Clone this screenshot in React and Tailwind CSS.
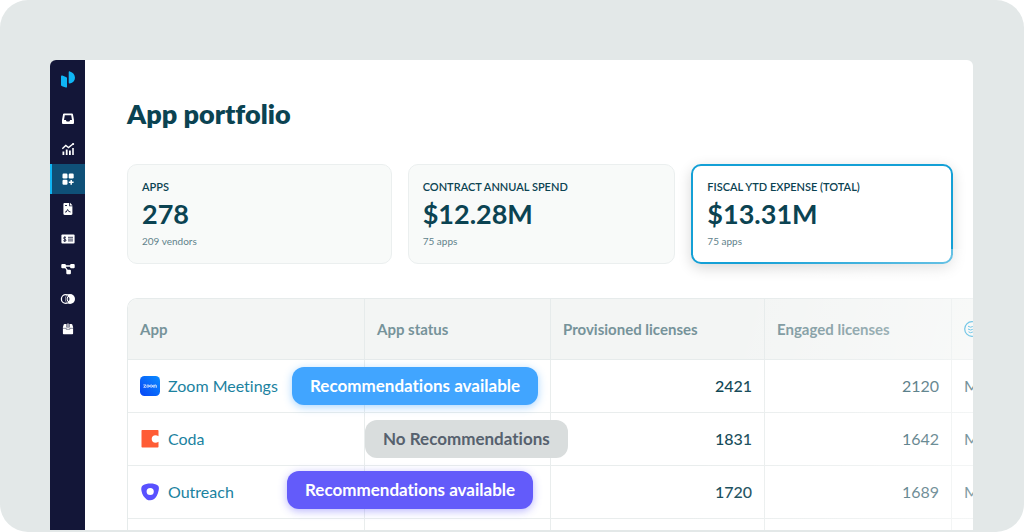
import React, { useState } from 'react';

const cards = [
  { label: 'APPS', value: '278', note: '209 vendors' },
  { label: 'CONTRACT ANNUAL SPEND', value: '$12.28M', note: '75 apps' },
  { label: 'FISCAL YTD EXPENSE (TOTAL)', value: '$13.31M', note: '75 apps' },
];

const ZoomLogo = () => (
  <svg viewBox="0 0 20 20" className="w-5 h-5 shrink-0" aria-hidden="true">
    <defs>
      <linearGradient id="zoomBlue" x1="1" y1="0" x2="0" y2="1">
        <stop offset="0" stopColor="#0a8cff" />
        <stop offset="1" stopColor="#0845f5" />
      </linearGradient>
    </defs>
    <rect width="20" height="20" rx="4.5" fill="url(#zoomBlue)" />
    <g fill="none" stroke="#fff" strokeWidth="0.7" strokeLinejoin="round" strokeLinecap="round">
      <path d="M3.7 8.9h2.2l-2.2 2.4h2.3" />
      <circle cx="8" cy="10.1" r="1.2" />
      <circle cx="11.2" cy="10.1" r="1.2" />
      <path d="M13.3 11.4V9.6c0-.9 1.5-.9 1.5 0v1.8M14.8 9.6c0-.9 1.6-.9 1.6 0v1.8" />
    </g>
  </svg>
);

const CodaLogo = () => (
  <svg viewBox="0 0 20 20" className="w-5 h-5 shrink-0" aria-hidden="true">
    <path
      d="M2.3 1h15.4a.8.8 0 0 1 .8.8v5.4c-1-.7-2-1-3-1-2.3 0-3.8 1.7-3.8 3.8s1.5 3.8 3.8 3.8c1 0 2-.3 3-1v5a.8.8 0 0 1-.8.8H2.3a.8.8 0 0 1-.8-.8V1.8a.8.8 0 0 1 .8-.8Z"
      fill="#ff5c35"
    />
  </svg>
);

const OutreachLogo = () => (
  <svg viewBox="0 0 20 20" className="w-5 h-5 shrink-0" aria-hidden="true">
    <path
      fillRule="evenodd"
      d="M10.5 1.5c3 0 5.3.6 7 1.7 1.5 1 1.7 2.6 1.2 5-1 4.6-2.7 7.5-5 9.1-2 1.4-5 1.4-7 .1-2.5-1.6-4.5-4.6-5.2-8.3C1 6.4 1.2 4.6 3 3.3c1.8-1.2 4.5-1.8 7.5-1.8ZM10.2 5.9a3.6 3.6 0 1 0 0 7.2 3.6 3.6 0 0 0 0-7.2Z"
      fill="#5951ff"
    />
  </svg>
);

const rows = [
  {
    name: 'Zoom Meetings',
    logo: <ZoomLogo />,
    status: 'Recommendations available',
    badge: '-left-[73px] top-[7px] bg-[#41a5ff] text-white shadow-[0_2px_8px_rgba(65,165,255,0.45)]',
    provisioned: 2421,
    engaged: 2120,
  },
  {
    name: 'Coda',
    logo: <CodaLogo />,
    status: 'No Recommendations',
    badge: 'left-0 top-[7px] bg-[#d9dddd] text-[#56616e]',
    provisioned: 1831,
    engaged: 1642,
  },
  {
    name: 'Outreach',
    logo: <OutreachLogo />,
    status: 'Recommendations available',
    badge: '-left-[78px] top-[5px] bg-[#635bfa] text-white shadow-[0_2px_8px_rgba(99,91,250,0.45)]',
    provisioned: 1720,
    engaged: 1689,
  },
];

const navItems = [
  {
    label: 'Inbox',
    icon: (
      <path
        fillRule="evenodd"
        d="M4.3 2.6h7.4c.7 0 1.2.4 1.3 1l1 5.5v2.7c0 .8-.5 1.3-1.3 1.3H3.3c-.8 0-1.300-.5-1.300-1.300V9.100l1-5.500c.1-.6.6-1 1.300-1Zm.5 1.600L4 9h1.800l.9 1.500h2.600l.9-1.500H12l-.8-4.800H4.800Z"
      />
    ),
  },
  {
    label: 'Analytics',
    icon: (
      <>
        <path d="M2.5 10.5h1.8V14H2.5zM5.8 8.5h1.8V14H5.8zM9 9.5h1.8V14H9zM12.2 7h1.6v7h-1.600z" />
        <path d="M2.3 7.7l3.5-3.2 2.7 2 4.8-3.7" fill="none" stroke="#fff" strokeWidth="1.4" />
        <circle cx="13.2" cy="2.9" r="1" />
      </>
    ),
  },
  {
    label: 'Apps',
    icon: (
      <>
        <rect x="2.5" y="2.5" width="5" height="5" rx="1.2" />
        <rect x="8.7" y="2.5" width="5" height="5" rx="1.2" />
        <rect x="2.5" y="8.7" width="5" height="5" rx="1.2" />
        <path d="M11.2 8.9v4.8M8.8 11.3h4.8" stroke="#fff" strokeWidth="1.5" />
      </>
    ),
  },
  {
    label: 'Contracts',
    icon: (
      <>
        <path d="M4.6 2h4.6v3.2h3.2v7.6c0 .7-.5 1.2-1.2 1.2H4.6c-.7 0-1.2-.5-1.2-1.2V3.2c0-.7.5-1.2 1.2-1.2Z" />
        <path d="M10 1.8l2.6 2.6H10z" />
        <path d="M5 4.5h2M5 11h1.2l1.4-2.5 1 1.8 2 .7" fill="none" stroke="#131638" strokeWidth="0.9" />
      </>
    ),
  },
  {
    label: 'Payments',
    icon: (
      <>
        <rect x="1.4" y="3.6" width="13.2" height="9" rx="1" />
        <path d="M8 6.3h5M8 8.1h5M8 9.9h5" stroke="#131638" strokeWidth="0.8" />
        <path
          d="M6 6.7C5.5 6 3.5 6 3.5 7.1S6 8 6 9.2s-2 1.2-2.7.4M4.8 5.4v5.5"
          fill="none"
          stroke="#131638"
          strokeWidth="0.9"
        />
      </>
    ),
  },
  {
    label: 'Workflows',
    icon: (
      <>
        <path d="M4 5h9M5 6l3.5 5" fill="none" stroke="#fff" strokeWidth="1.3" />
        <rect x="1.3" y="3" width="4.6" height="4.2" rx="1" />
        <rect x="10.1" y="3" width="4.6" height="4.2" rx="1" />
        <rect x="6.3" y="8.8" width="4.6" height="4.4" rx="1" />
      </>
    ),
  },
  {
    label: 'Overlap',
    icon: (
      <>
        <circle cx="5.8" cy="8" r="4.4" fill="none" stroke="#fff" strokeWidth="1.3" />
        <circle cx="10" cy="8" r="5" />
        <path d="M7.6 4.6a4.4 4.4 0 0 0 0 6.8" fill="none" stroke="#131638" strokeWidth="1.2" />
        <path d="M8.6 6v4M7.5 8h2.2" stroke="#131638" strokeWidth="0.9" />
      </>
    ),
  },
  {
    label: 'Marketplace',
    icon: (
      <>
        <path d="M4.6 3h1.9v3.600h3V3h1.900c.4 0 .7.2.9.600l.8 2.600v6c0 .7-.4 1.100-1.100 1.100H4c-.7 0-1.100-.4-1.100-1.100v-6l.8-2.600c.2-.4.5-.6.9-.6Z" />
        <path d="M7.400 2.600h1.200v4H7.400z" />
        <path d="M2.900 7.300h3.300v1h3.600v-1h3.300" fill="none" stroke="#131638" strokeWidth="0.5" />
      </>
    ),
  },
];

const Sidebar = ({ active, onSelect }) => (
  <nav className="w-[35px] shrink-0 bg-[#131638]">
    <a href="#home" aria-label="Home" className="flex h-11 justify-center pt-[11px]">
      <svg viewBox="0 0 14 17" className="w-[14px] h-[17px]" fill="#0fb5f5" aria-hidden="true">
        <path d="M0 5.5c0-.9.5-1.2 1.3-.9l3.7 1.3c.7.3 1 .7 1 1.4v8.4c0 .8-.4 1.1-1.2.8l-3.7-1.2C.4 15 0 14.6 0 13.9z" />
        <path d="M7.7 1.3c0-.8.4-1.1 1.2-.9C12 1.3 14 3.7 14 6.7c0 3-2 5-5.1 5.7-.8.2-1.2-.1-1.2-.9z" />
      </svg>
    </a>
    {navItems.map((item) => (
      <button
        key={item.label}
        type="button"
        aria-label={item.label}
        onClick={() => onSelect(item.label)}
        className={`flex h-[30px] w-full items-center justify-center border-l-2 pr-[2px] ${
          item.label === active ? 'border-[#0fb5f5] bg-[#0f5078]' : 'border-transparent'
        }`}
      >
        <svg viewBox="0 0 16 16" className="w-4 h-4" fill="#fff" aria-hidden="true">
          {item.icon}
        </svg>
      </button>
    ))}
  </nav>
);

const StatCard = ({ card, selected, onSelect }) => (
  <button
    type="button"
    onClick={() => onSelect(card.label)}
    className={`flex h-[100px] flex-col items-start rounded-[10px] text-left text-[#0b4352] ${
      selected
        ? 'border-2 border-[#14a0d6] bg-white px-[14px] pt-[14px] shadow-[0_4px_14px_rgba(0,0,0,0.16)]'
        : 'border border-[#ebefef] bg-[#f8faf9] px-[14px] pt-[15px]'
    }`}
  >
    <span className="text-[11px] leading-[13px] font-semibold">{card.label}</span>
    <span className="mt-[5px] text-[27px] leading-8 font-bold">{card.value}</span>
    <span className="mt-[5px] text-[10px] leading-3 text-[#5f828b]">{card.note}</span>
  </button>
);

const AppTable = () => {
  const head = 'border-r border-[#e6ebeb] px-3 text-left font-bold';
  const cell = 'border-r border-[#e9eded] px-3';

  return (
    <div className="overflow-hidden rounded-tl-[10px] border-t border-l border-[#e6ebeb]">
      <table className="w-full table-fixed border-separate border-spacing-0 whitespace-nowrap">
        <colgroup>
          <col className="w-[237px]" />
          <col className="w-[186px]" />
          <col className="w-[214px]" />
          <col className="w-[187px]" />
          <col />
        </colgroup>
        <thead>
          <tr className="h-[61px] bg-[#f3f5f4] text-[15px] text-[#76939a] [&>th]:border-b">
            <th className={head}>App</th>
            <th className={head}>App status</th>
            <th className={head}>Provisioned licenses</th>
            <th className={head}>Engaged licenses</th>
            <th className="border-[#e6ebeb] pl-3 text-left" aria-label="Source">
              <svg viewBox="0 0 16 16" className="w-4 h-4 max-w-none" fill="none" stroke="#14a0d6" aria-hidden="true">
                <circle cx="8" cy="8" r="7.3" strokeWidth="1.2" />
                <path d="M4 5.2l2.5 1 2-.6 3.5.8M4 8l2.5 1 2-.6 3.5.8M4.5 10.8l2 .9 2-.6 2.5.6" />
              </svg>
            </th>
          </tr>
        </thead>
        <tbody>
          {rows.map((row) => (
            <tr key={row.name} className="h-[53px] text-base text-[#0b4352] [&>td]:border-b">
              <td className={cell}>
                <a href="#app" className="flex items-center gap-2 text-[#1b829f]">
                  {row.logo}
                  {row.name}
                </a>
              </td>
              <td className={`${cell} relative`}>
                <span className={`absolute z-10 rounded-xl px-[18px] py-[7px] text-[17px] leading-6 font-bold ${row.badge}`}>
                  {row.status}
                </span>
              </td>
              <td className={`${cell} text-right font-medium`}>{row.provisioned}</td>
              <td className={`${cell} text-right`}>{row.engaged}</td>
              <td className="border-[#e9eded] pl-3">M</td>
            </tr>
          ))}
          <tr className="h-[53px]">
            <td className={cell} />
            <td className={cell} />
            <td className={cell} />
            <td className={cell} />
            <td />
          </tr>
        </tbody>
      </table>
    </div>
  );
};

const App = () => {
  const [active, setActive] = useState('Apps');
  const [selected, setSelected] = useState('FISCAL YTD EXPENSE (TOTAL)');

  return (
    <div className="h-screen bg-white font-['Lato',sans-serif] [font-variant-ligatures:none]">
      <div className="flex h-full overflow-hidden rounded-[28px] bg-[#e3e8e8] pt-[60px] pr-[51px] pb-[2px] pl-[50px]">
        <div className="relative flex min-w-0 flex-1 overflow-hidden rounded-t-md bg-white">
          <Sidebar active={active} onSelect={setActive} />

          <main className="min-w-0 flex-1 pl-[42px]">
            <h1 className="pt-9 text-[27px] leading-9 font-extrabold text-[#0b4352]">App portfolio</h1>

            {/* Summary cards */}
            <div className="mt-8 mr-5 grid grid-cols-[265fr_268fr_262fr] gap-4">
              {cards.map((card) => (
                <StatCard
                  key={card.label}
                  card={card}
                  selected={card.label === selected}
                  onSelect={setSelected}
                />
              ))}
            </div>

            <div className="mt-[34px]">
              <AppTable />
            </div>
          </main>

          {/* Fade towards the right edge */}
          <div className="pointer-events-none absolute right-0 bottom-0 z-20 h-[281px] w-[300px] bg-linear-[105deg,transparent_20%,rgba(255,255,255,0.5)_100%]" />
        </div>
      </div>
    </div>
  );
};

export default App;
